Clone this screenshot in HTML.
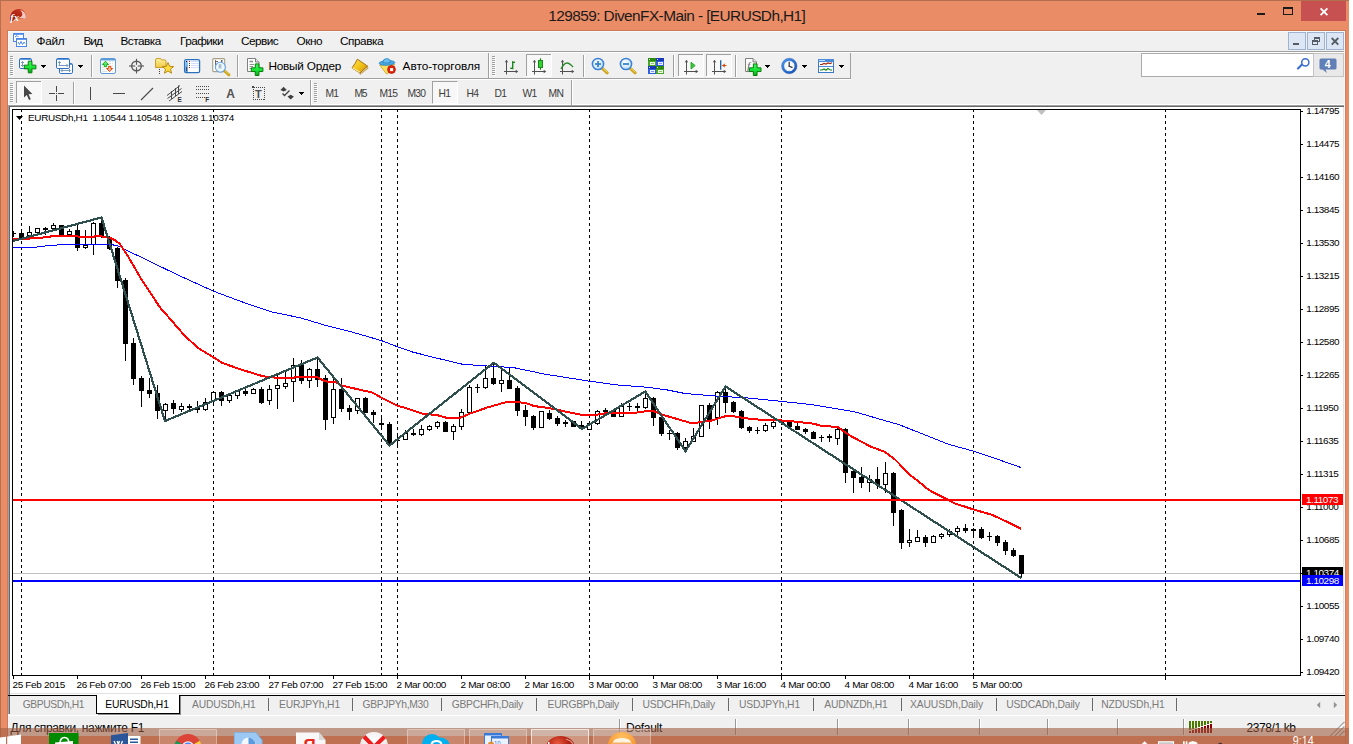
<!DOCTYPE html>
<html lang="ru"><head><meta charset="utf-8"><title>129859: DivenFX-Main - [EURUSDh,H1]</title>
<style>
html,body{margin:0;padding:0;background:#fff;}
body{width:1353px;height:744px;overflow:hidden;position:relative;font-family:"Liberation Sans",sans-serif;}
#win{position:absolute;left:0;top:0;width:1349px;height:744px;background:#ea8c66;overflow:hidden;}
#win div{position:absolute;white-space:nowrap;}
#edgeT{left:0;top:0;width:1349px;height:1px;background:#b07050;}
#edgeL{left:0;top:0;width:1px;height:744px;background:#b8704f;}
#title{color:#1a1a1a;line-height:20px;}
#wmin{left:1257px;top:13px;width:8px;height:2px;background:#1a1a1a;}
#wmax{left:1283px;top:7px;width:8px;height:5px;border:1px solid #1a1a1a;border-top-width:2px;}
#wclose{left:1301px;top:1px;width:45px;height:20px;background:#c75050;}
#client{left:8px;top:31px;width:1337px;height:705px;background:#f0f0f0;}
#menuline{left:0;top:20px;width:1337px;height:1px;background:#a0a0a0;}
#menuline2{left:0;top:21px;width:1337px;height:1px;background:#fff;}
#tb1line{left:0;top:47px;width:843px;height:1px;background:#a0a0a0;}
#tb1line2{left:0;top:48px;width:843px;height:1px;background:#fff;}
#tb1end{left:842px;top:22px;width:1px;height:26px;background:#a0a0a0;}
#tb2line{left:0;top:73px;width:1337px;height:1px;background:#fff;}
.mi{color:#000;line-height:14px;}
.mdib{top:32px;width:16px;height:16px;border:1px solid #9fb2cf;background:#dce6f4;}
.mdib svg{position:absolute;left:-1px;top:-1px;}
#search{left:1141px;top:53px;width:171px;height:22px;border:1px solid #ababab;background:#fff;}
#chatbtn{left:1313px;top:53px;width:29px;height:22px;border:1px solid #c4c4c4;background:#e9e9e9;}
.tf{color:#3c3c3c;line-height:12px;}
.pressed{background:#f7f7f7;border:1px solid #fff;border-top-color:#a0a0a0;border-left-color:#a0a0a0;box-sizing:border-box;}
#frameT1{left:8px;top:105px;width:1336px;height:1px;background:#a0a0a0;}
#frameT2{left:9px;top:106px;width:1335px;height:1px;background:#696969;}
#frameL1{left:8px;top:105px;width:1px;height:609px;background:#a0a0a0;}
#frameL2{left:9px;top:106px;width:1px;height:608px;background:#696969;}
svg.chart{position:absolute;}
.ct{line-height:11px;color:#000;}
.plab{left:1302px;width:41px;height:11px;color:#fff;line-height:11px;text-indent:4px;overflow:hidden;}
.tabline{top:695px;height:1px;background:#000;}
#win .acttab{left:96px;top:695px;width:82px;height:18px;background:#fff;border:1px solid #000;border-top:none;}
.tab{line-height:12px;color:#7a7a7a;}
.tab.act{color:#000;}
.tsep{top:698px;width:1px;height:13px;background:#6a6a6a;}
#stline{left:8px;top:715px;width:1337px;height:1px;background:#fff;}
.st{line-height:14px;color:#000;}
.ssep{top:719px;width:1px;height:16px;background:#989898;box-shadow:1px 0 0 #fff;}
.tbt{line-height:14px;color:#000;}
#taskbar{left:0;top:728px;width:1349px;height:16px;background:rgba(160,93,65,0.6);}
#frameR1{left:1343px;top:105px;width:1px;height:589px;background:#e3e3e3;}
#frameR2{left:1344px;top:31px;width:1px;height:705px;background:#fbfbfb;}
#edgeR{left:1345px;top:31px;width:1px;height:713px;background:#cf7d5c;}
#inT{left:7px;top:30px;width:1339px;height:1px;background:#cc7b5a;}
#inL{left:7px;top:30px;width:1px;height:714px;background:#cc7b5a;}
#clT{left:0;top:0;width:1337px;height:1px;background:#f7f8f8;}
#clL{left:0;top:0;width:1px;height:75px;background:#f7f8f8;}
.atsh{background:#8c8c8c;}
#frameB1{left:10px;top:693px;width:1334px;height:1px;background:#e3e3e3;}
#frameB2{left:9px;top:694px;width:1336px;height:1px;background:#fdfdfd;}

</style></head><body>
<div id="win">
<div id="edgeT"></div><div id="edgeL"></div><div id="inT"></div><div id="inL"></div>
<div id="title" style="left:548.3px;top:6px;font-size:15.4px;letter-spacing:-0.575px;">129859: DivenFX-Main - [EURUSDh,H1]</div>
<div id="wmin"></div><div id="wmax"></div><div id="wclose"><svg width="45" height="20"><path d="M19.6 7.4 L26.4 14.2 M26.4 7.4 L19.6 14.2" stroke="#fff" stroke-width="1.8" fill="none"/></svg></div>
<div id="client">
<div id="clT"></div><div id="clL"></div><div id="menuline"></div><div id="menuline2"></div>
<div id="tb1line"></div><div id="tb1line2"></div><div id="tb1end"></div>
<div id="tb2line"></div>
</div>
<div class="mi" style="left:36.5px;top:34px;font-size:11.8px;letter-spacing:-0.254px;">Файл</div>
<div class="mi" style="left:83.5px;top:34px;font-size:11.8px;letter-spacing:-1.015px;">Вид</div>
<div class="mi" style="left:120.5px;top:34px;font-size:11.8px;letter-spacing:-0.508px;">Вставка</div>
<div class="mi" style="left:180px;top:34px;font-size:11.8px;letter-spacing:-0.558px;">Графики</div>
<div class="mi" style="left:241px;top:34px;font-size:11.8px;letter-spacing:-0.568px;">Сервис</div>
<div class="mi" style="left:296.5px;top:34px;font-size:11.8px;letter-spacing:-0.48px;">Окно</div>
<div class="mi" style="left:340px;top:34px;font-size:11.8px;letter-spacing:-0.469px;">Справка</div>
<div class="mdib" style="left:1288px"><svg width="18" height="18"><rect x="5" y="11" width="6" height="2" fill="#555c66"/></svg></div>
<div class="mdib" style="left:1307px"><svg width="18" height="18" shape-rendering="crispEdges"><rect x="7.5" y="5.5" width="5" height="4" fill="none" stroke="#555c66"/><rect x="7" y="5" width="6" height="2" fill="#555c66"/><rect x="5.5" y="8.5" width="5" height="4" fill="#dce6f4" stroke="#555c66"/><rect x="5" y="8" width="6" height="2" fill="#555c66"/></svg></div>
<div class="mdib" style="left:1326px"><svg width="18" height="18"><path d="M5.700 6 L12.300 12.600 M12.300 6 L5.700 12.600" stroke="#555c66" stroke-width="1.900"/></svg></div>
<div id="search"><svg width="171" height="22" style="position:absolute;left:0;top:0"><line x1="156" y1="14.500" x2="161.500" y2="9" stroke="#3a6ed0" stroke-width="2.200" stroke-linecap="round"/><circle cx="163.300" cy="8.300" r="3.600" fill="#fff" stroke="#3a6ed0" stroke-width="1.500"/></svg></div><div id="chatbtn"><svg width="29" height="22" style="position:absolute;left:0;top:0"><path d="M7 4.500 h14 q1.500 0 1.500 1.500 v8 q0 1.500 -1.500 1.500 h-9.500 l1.500 3.500 l-4.500 -3.500 h-1.500 q-1.500 0 -1.500 -1.500 v-8 q0 -1.500 1.500 -1.500z" fill="#5f7fb6"/><text x="10.800" y="14.200" font-family="Liberation Sans,sans-serif" font-weight="bold" font-size="10.500" fill="#fff">4</text></svg></div>
<svg id="tbicons" style="position:absolute;left:0;top:0" width="1349" height="106" viewBox="0 0 1349 106">
<defs>
<linearGradient id="gGreen" x1="0" y1="0" x2="0" y2="1"><stop offset="0" stop-color="#3cf45a"/><stop offset=".5" stop-color="#18e838"/><stop offset="1" stop-color="#0aa818"/></linearGradient>
<linearGradient id="gGold" x1="0" y1="0" x2="1" y2="1"><stop offset="0" stop-color="#ffe455"/><stop offset=".5" stop-color="#f2c418"/><stop offset="1" stop-color="#c88c10"/></linearGradient>
<linearGradient id="gFold" x1="0" y1="0" x2="0" y2="1"><stop offset="0" stop-color="#fff2a0"/><stop offset="1" stop-color="#eec840"/></linearGradient>
<linearGradient id="gBlueBar" x1="0" y1="0" x2="0" y2="1"><stop offset="0" stop-color="#5a9be6"/><stop offset="1" stop-color="#2a6cc0"/></linearGradient>
<radialGradient id="gLens" cx=".4" cy=".35" r=".7"><stop offset="0" stop-color="#ffffff"/><stop offset="1" stop-color="#b8dcf8"/></radialGradient>
<radialGradient id="gBall" cx=".65" cy=".3" r=".8"><stop offset="0" stop-color="#f0a090"/><stop offset=".35" stop-color="#c8281a"/><stop offset="1" stop-color="#7a1008"/></radialGradient>
<linearGradient id="gBall2" x1="0" y1="1" x2="1" y2="0"><stop offset="0" stop-color="#8a1408"/><stop offset=".6" stop-color="#b82a18"/><stop offset="1" stop-color="#d04a38"/></linearGradient>
<linearGradient id="gSide" x1="0" y1="0" x2="0" y2="1"><stop offset="0" stop-color="#94c8f4"/><stop offset="1" stop-color="#3f88d4"/></linearGradient>
<linearGradient id="gClock" x1="0" y1="0" x2="1" y2="1"><stop offset="0" stop-color="#4a94ee"/><stop offset="1" stop-color="#1450b4"/></linearGradient>
</defs>
<path d="M10.200 20.600 C9.300 14 13 9 19 9.100 C23.600 9.300 26.400 13 26.100 18.600 C23 19.600 19.500 17.400 16.600 18.500 C15 19.300 14 21.700 10.400 21.400 Z" fill="url(#gBall2)"/>
<path d="M20.300 10.300 C24 10.800 26.300 14 25.900 18.500 C23.500 19.100 21 18 18.600 17.700 C22.500 17 23.800 14 20.300 10.300Z" fill="#fbe4dc" opacity=".85"/>
<text x="10.300" y="20.600" font-family="Liberation Serif,serif" font-style="italic" font-weight="bold" font-size="10.500" fill="#fff">fx</text>
<g shape-rendering="crispEdges" fill="#fff" stroke="#4a86e8" stroke-width="1"><rect x="13.5" y="33.5" width="10" height="8" stroke-dasharray="1 0"/><rect x="16.5" y="38.5" width="10" height="8"/></g>
<rect x="13" y="33" width="11" height="2" fill="#4a86e8" opacity=".8"/><rect x="16" y="38" width="11" height="2" fill="#4a86e8" opacity=".85"/>
<polyline points="18,42 19.5,44.5 21,41.5 22.5,44.5 24,42 25,43.5" fill="none" stroke="#4a86e8" stroke-width="1"/>
<polyline points="15,37 17,35.5 18.5,37" fill="none" stroke="#4a86e8" stroke-width="1"/>
<g shape-rendering="crispEdges"><rect x="10" y="56" width="3" height="1" fill="#a0a0a0"/><rect x="11" y="57" width="3" height="1" fill="#fff" opacity=".9"/><rect x="10" y="58" width="3" height="1" fill="#a0a0a0"/><rect x="11" y="59" width="3" height="1" fill="#fff" opacity=".9"/><rect x="10" y="60" width="3" height="1" fill="#a0a0a0"/><rect x="11" y="61" width="3" height="1" fill="#fff" opacity=".9"/><rect x="10" y="62" width="3" height="1" fill="#a0a0a0"/><rect x="11" y="63" width="3" height="1" fill="#fff" opacity=".9"/><rect x="10" y="64" width="3" height="1" fill="#a0a0a0"/><rect x="11" y="65" width="3" height="1" fill="#fff" opacity=".9"/><rect x="10" y="66" width="3" height="1" fill="#a0a0a0"/><rect x="11" y="67" width="3" height="1" fill="#fff" opacity=".9"/><rect x="10" y="68" width="3" height="1" fill="#a0a0a0"/><rect x="11" y="69" width="3" height="1" fill="#fff" opacity=".9"/><rect x="10" y="70" width="3" height="1" fill="#a0a0a0"/><rect x="11" y="71" width="3" height="1" fill="#fff" opacity=".9"/><rect x="10" y="72" width="3" height="1" fill="#a0a0a0"/><rect x="11" y="73" width="3" height="1" fill="#fff" opacity=".9"/><rect x="10" y="74" width="3" height="1" fill="#a0a0a0"/><rect x="11" y="75" width="3" height="1" fill="#fff" opacity=".9"/></g>
<rect x="19.5" y="58.5" width="12" height="10" rx="1.300" fill="#fbfdff" stroke="#2f6fc4" stroke-width="1"/><rect x="20" y="59" width="11" height="1" fill="#5f9be2"/>
<g stroke="#7a9ac0" stroke-width="1" fill="none"><line x1="22.500" y1="61.500" x2="22.500" y2="66.500"/><polyline points="21,63 22.500,61.500 24,63"/><polyline points="21,65 22.500,66.500 24,65"/></g>
<path d="M28.25 61.2 h3.7 v3.9499999999999997 h3.9499999999999997 v3.7 h-3.9499999999999997 v3.9499999999999997 h-3.7 v-3.9499999999999997 h-3.9499999999999997 v-3.7 h3.9499999999999997 z" fill="url(#gGreen)" stroke="#0a7a0a" stroke-width="1" stroke-linejoin="round"/>
<g shape-rendering="crispEdges" fill="#000"><rect x="41" y="65" width="5" height="1"/><rect x="42" y="66" width="3" height="1"/><rect x="43" y="67" width="1" height="1"/></g>
<rect x="59.5" y="63.5" width="13" height="10" rx="1.300" fill="#fbfdff" stroke="#2f6fc4" stroke-width="1"/><rect x="60" y="64" width="12" height="1" fill="#5f9be2"/>
<rect x="56.5" y="58.5" width="13" height="10" rx="1.300" fill="#fbfdff" stroke="#2f6fc4" stroke-width="1"/><rect x="57" y="59" width="12" height="1" fill="#5f9be2"/>
<g stroke="#7a9ac0" stroke-width="1" fill="none"><line x1="59.500" y1="61.500" x2="59.500" y2="66"/><polyline points="58,63 59.500,61.500 61,63"/><line x1="58.500" y1="65.500" x2="68" y2="65.500"/><polyline points="66.500,64 68,65.500 66.500,67"/><line x1="61" y1="70.500" x2="70.500" y2="70.500"/><polyline points="62.500,69 61,70.500 62.500,72"/><polyline points="69,69 70.500,70.500 69,72"/></g>
<g shape-rendering="crispEdges" fill="#000"><rect x="78" y="65" width="5" height="1"/><rect x="79" y="66" width="3" height="1"/><rect x="80" y="67" width="1" height="1"/></g>
<g shape-rendering="crispEdges"><rect x="91" y="55" width="1" height="22" fill="#a0a0a0"/><rect x="92" y="55" width="1" height="22" fill="#fff"/></g>
<rect x="100.500" y="58.500" width="15" height="15" rx="1.600" fill="#fff" stroke="#5b9bd8" stroke-width="1"/><path d="M100.500 60.500 v-0.500 q0 -1.500 1.500 -1.500 h12 q1.500 0 1.500 1.500 v0.500z" fill="#5b9bd8"/>
<g stroke="#e0e0e0" stroke-width="1" shape-rendering="crispEdges"><line x1="109" y1="61.500" x2="111" y2="61.500"/><line x1="112" y1="61.500" x2="113" y2="61.500"/><line x1="109" y1="63.500" x2="111" y2="63.500"/><line x1="112" y1="63.500" x2="113" y2="63.500"/><line x1="112" y1="65.500" x2="113" y2="65.500"/><line x1="102" y1="67.500" x2="104" y2="67.500"/><line x1="102" y1="69.500" x2="105" y2="69.500"/><line x1="102" y1="71.500" x2="107" y2="71.500"/><line x1="112" y1="71.500" x2="113" y2="71.500"/></g>
<polygon points="105.450,61.200 108.600,64.500 106.700,64.500 106.700,66.700 104.200,66.700 104.200,64.500 102.300,64.500" fill="#58ec70" stroke="#10a010" stroke-width=".9" stroke-linejoin="round"/>
<polygon points="109.600,71.600 106.500,68.500 108.400,68.500 108.400,66.300 110.900,66.300 110.900,68.500 112.700,68.500" fill="#ffb496" stroke="#d84000" stroke-width=".9" stroke-linejoin="round"/>
<g stroke="#585858" fill="none"><circle cx="136.5" cy="66" r="4.8" stroke-width="1.4"/><line x1="129" y1="66" x2="135.300" y2="66" stroke-width="1.1"/><line x1="137.700" y1="66" x2="144" y2="66" stroke-width="1.1"/><line x1="136.5" y1="58.8" x2="136.5" y2="64.800" stroke-width="1.1"/><line x1="136.5" y1="67.200" x2="136.5" y2="73.5" stroke-width="1.1"/></g>
<path d="M155.5 60 q0 -1.5 1.5 -1.5 h3 q1.2 0 1.6 1.4 h3.2 q1.2 0 1.2 1.2 v6.4 h-10.5z" fill="url(#gFold)" stroke="#c8a030" stroke-width="1"/>
<g fill="#404040" shape-rendering="crispEdges"><rect x="159" y="69" width="1" height="1"/><rect x="159" y="71" width="1" height="1"/><rect x="159" y="73" width="1" height="1"/></g>
<polygon points="168,62.6 169.6,66.3 173.6,66.6 170.5,69.2 171.5,73.2 168,71 164.5,73.2 165.5,69.2 162.4,66.6 166.4,66.3" fill="#ffdc40" stroke="#b88a10" stroke-width="1" stroke-linejoin="round"/>
<rect x="184.600" y="59.600" width="15" height="13" rx="1.600" fill="#fff" stroke="#2a70bc" stroke-width="1.300"/>
<rect x="185.300" y="60.300" width="2.500" height="11.600" fill="url(#gSide)"/>
<g shape-rendering="crispEdges"><rect x="186" y="61" width="1" height="1" fill="#101010"/><rect x="186" y="67" width="1" height="4" fill="#484c58"/><rect x="191" y="61" width="8" height="1" fill="#d4e0fa"/><rect x="191" y="63" width="8" height="1" fill="#d4e0fa"/><rect x="191" y="65" width="8" height="1" fill="#d4e0fa"/><rect x="191" y="67" width="8" height="1" fill="#d4e0fa"/><rect x="189" y="61" width="1" height="1" fill="#f01010"/><rect x="189" y="63" width="1" height="1" fill="#284a28"/><rect x="189" y="65" width="1" height="1" fill="#284a28"/><rect x="189" y="67" width="1" height="1" fill="#f01010"/></g>
<rect x="212.700" y="58.600" width="12" height="13" rx="1" fill="#fefefc" stroke="#a8a088" stroke-width="1.100"/>
<g stroke="#686868" stroke-width="1" fill="none"><line x1="215.500" y1="60" x2="215.500" y2="65.500"/><line x1="215.500" y1="61.500" x2="218" y2="61.500"/><line x1="221.500" y1="60" x2="221.500" y2="62.500"/><line x1="221.500" y1="61" x2="223" y2="61"/></g>
<line x1="224.600" y1="71" x2="229" y2="74.900" stroke="#c8a010" stroke-width="2.800" stroke-linecap="round"/><line x1="225.200" y1="70.900" x2="229.300" y2="74.500" stroke="#f0dc70" stroke-width=".9"/>
<circle cx="220.400" cy="67.200" r="5" fill="#eaf8fc" fill-opacity=".9" stroke="#6aa2e2" stroke-width="1.100"/>
<rect x="218.600" y="64.200" width="2.800" height="4.300" fill="#a4b6c2" opacity=".9"/>
<g shape-rendering="crispEdges"><rect x="237" y="55" width="1" height="22" fill="#a0a0a0"/><rect x="238" y="55" width="1" height="22" fill="#fff"/></g>
<path d="M247.500 58.500 h8 l3.500 3.500 v9.500 h-11.500z" fill="#fff" stroke="#808080" stroke-width="1"/><path d="M255.500 58.500 v3.500 h3.500" fill="#e8e8e8" stroke="#808080" stroke-width="1"/>
<g stroke="#909090" stroke-width="1"><line x1="249.500" y1="61.500" x2="253" y2="61.500" stroke-width="1.600"/><line x1="249.500" y1="64.500" x2="254" y2="64.500"/><line x1="249.500" y1="66.500" x2="253" y2="66.500"/><line x1="249.500" y1="68.500" x2="252" y2="68.500"/></g>
<path d="M255.25000000000003 63.900000000000006 h3.7 v3.9499999999999997 h3.9499999999999997 v3.7 h-3.9499999999999997 v3.9499999999999997 h-3.7 v-3.9499999999999997 h-3.9499999999999997 v-3.7 h3.9499999999999997 z" fill="url(#gGreen)" stroke="#0a7a0a" stroke-width="1" stroke-linejoin="round"/>
<path d="M360.100 74.300 L368 68.300 L367.500 66.300 L359.800 72.200z" fill="#e6d49a" stroke="#a87a20" stroke-width=".700" stroke-linejoin="round"/>
<path d="M357.400 59.200 L367.400 66 L360 73 L352 67.900 Q355 64 357.400 59.200z" fill="url(#gGold)" stroke="#a86c10" stroke-width="1" stroke-linejoin="round"/>
<path d="M352.600 67.700 L360 72.300" stroke="#fdeea0" stroke-width="1.300" opacity=".9"/>
<polygon points="379.700,65 394.700,64.400 388,73.600 386.300,73.800" fill="#f8e060" stroke="#d0a020" stroke-width=".800" stroke-linejoin="round"/>
<ellipse cx="387" cy="62.900" rx="7.900" ry="2.400" transform="rotate(-3 387 62.900)" fill="#4aa8e0" stroke="#2080c0" stroke-width=".700"/>
<path d="M382.800 62.500 q0.300 -4 3.900 -4 q3.600 0 3.900 3.800 q-3.900 1.500 -7.800 .200z" fill="#6cbcec" stroke="#2080c0" stroke-width=".700"/>
<circle cx="391.500" cy="69.500" r="3.900" fill="#e42408" stroke="#b01000" stroke-width=".800"/><rect x="390.100" y="68.100" width="3" height="3" fill="#fff"/>
<g shape-rendering="crispEdges"><rect x="488" y="53" width="1" height="25" fill="#a0a0a0"/><rect x="489" y="53" width="1" height="25" fill="#fff"/></g>
<g shape-rendering="crispEdges"><rect x="492" y="56" width="3" height="1" fill="#a0a0a0"/><rect x="493" y="57" width="3" height="1" fill="#fff" opacity=".9"/><rect x="492" y="58" width="3" height="1" fill="#a0a0a0"/><rect x="493" y="59" width="3" height="1" fill="#fff" opacity=".9"/><rect x="492" y="60" width="3" height="1" fill="#a0a0a0"/><rect x="493" y="61" width="3" height="1" fill="#fff" opacity=".9"/><rect x="492" y="62" width="3" height="1" fill="#a0a0a0"/><rect x="493" y="63" width="3" height="1" fill="#fff" opacity=".9"/><rect x="492" y="64" width="3" height="1" fill="#a0a0a0"/><rect x="493" y="65" width="3" height="1" fill="#fff" opacity=".9"/><rect x="492" y="66" width="3" height="1" fill="#a0a0a0"/><rect x="493" y="67" width="3" height="1" fill="#fff" opacity=".9"/><rect x="492" y="68" width="3" height="1" fill="#a0a0a0"/><rect x="493" y="69" width="3" height="1" fill="#fff" opacity=".9"/><rect x="492" y="70" width="3" height="1" fill="#a0a0a0"/><rect x="493" y="71" width="3" height="1" fill="#fff" opacity=".9"/><rect x="492" y="72" width="3" height="1" fill="#a0a0a0"/><rect x="493" y="73" width="3" height="1" fill="#fff" opacity=".9"/><rect x="492" y="74" width="3" height="1" fill="#a0a0a0"/><rect x="493" y="75" width="3" height="1" fill="#fff" opacity=".9"/></g>
<g stroke="#505050" stroke-width="1" fill="#505050"><line x1="506.5" y1="61" x2="506.5" y2="74.5"/><line x1="504" y1="71.5" x2="517" y2="71.5"/><polygon points="506.5,59.7 504.8,62.3 508.2,62.3" stroke="none"/><polygon points="518.3,71.5 515.7,69.8 515.7,73.2" stroke="none"/></g>
<g stroke="#1a8a1a" stroke-width="1.400" fill="none"><line x1="512.700" y1="61.300" x2="512.700" y2="69.300"/><line x1="512.700" y1="62.300" x2="515" y2="62.300"/><line x1="510.200" y1="68.300" x2="512.700" y2="68.300"/></g>
<g shape-rendering="crispEdges"><rect x="526" y="54" width="26" height="23" fill="#f8f8f8"/><rect x="526" y="54" width="26" height="1" fill="#a0a0a0"/><rect x="526" y="54" width="1" height="23" fill="#a0a0a0"/><rect x="526" y="76" width="26" height="1" fill="#fff"/><rect x="551" y="54" width="1" height="23" fill="#fff"/></g>
<g stroke="#505050" stroke-width="1" fill="#505050"><line x1="534.5" y1="61" x2="534.5" y2="74.5"/><line x1="532" y1="71.5" x2="545" y2="71.5"/><polygon points="534.5,59.7 532.8,62.3 536.2,62.3" stroke="none"/><polygon points="546.3,71.5 543.7,69.8 543.7,73.2" stroke="none"/></g>
<line x1="540.500" y1="58.300" x2="540.500" y2="69.800" stroke="#1a8a1a" stroke-width="1.200"/><rect x="538.500" y="60.500" width="4" height="7" fill="#30d030" stroke="#1a8a1a" stroke-width="1"/>
<g stroke="#505050" stroke-width="1" fill="#505050"><line x1="562.5" y1="61" x2="562.5" y2="74.5"/><line x1="560" y1="71.5" x2="573" y2="71.5"/><polygon points="562.5,59.7 560.8,62.3 564.2,62.3" stroke="none"/><polygon points="574.3,71.5 571.7,69.8 571.7,73.2" stroke="none"/></g>
<path d="M561 69 Q564 63 567 63 Q569.500 63 573 67" fill="none" stroke="#2a8a2a" stroke-width="1.300"/>
<g shape-rendering="crispEdges"><rect x="583" y="55" width="1" height="22" fill="#a0a0a0"/><rect x="584" y="55" width="1" height="22" fill="#fff"/></g>
<line x1="602" y1="68.2" x2="607.2" y2="72.8" stroke="#caa018" stroke-width="3" stroke-linecap="round"/><line x1="602.6" y1="68.2" x2="607.4" y2="72.4" stroke="#f4e070" stroke-width="1"/><circle cx="598" cy="64" r="5.600" fill="url(#gLens)" stroke="#3a80d4" stroke-width="1.500"/><rect x="595" y="63.1" width="6" height="1.800" fill="#3a86c8"/><rect x="597.1" y="61" width="1.800" height="6" fill="#3a86c8"/>
<line x1="630" y1="68.2" x2="635.2" y2="72.8" stroke="#caa018" stroke-width="3" stroke-linecap="round"/><line x1="630.6" y1="68.2" x2="635.4" y2="72.4" stroke="#f4e070" stroke-width="1"/><circle cx="626" cy="64" r="5.600" fill="url(#gLens)" stroke="#3a80d4" stroke-width="1.500"/><rect x="623" y="63.1" width="6" height="1.800" fill="#3a86c8"/>
<g shape-rendering="crispEdges"><rect x="648" y="58" width="8" height="8" fill="#4aa828"/><rect x="648" y="58" width="8" height="2.500" fill="#2c8a10"/><rect x="649.5" y="61.5" width="5" height="3.500" fill="#fff" opacity=".92"/><rect x="650.5" y="62.5" width="3" height="1" fill="#4aa828" opacity=".6"/><rect x="649" y="59" width="1" height="1" fill="#fff" opacity=".8"/><rect x="656" y="58" width="8" height="8" fill="#3060e0"/><rect x="656" y="58" width="8" height="2.500" fill="#1838b8"/><rect x="657.5" y="61.5" width="5" height="3.500" fill="#fff" opacity=".92"/><rect x="658.5" y="62.5" width="3" height="1" fill="#3060e0" opacity=".6"/><rect x="657" y="59" width="1" height="1" fill="#fff" opacity=".8"/><rect x="648" y="66" width="8" height="8" fill="#3060e0"/><rect x="648" y="66" width="8" height="2.500" fill="#1838b8"/><rect x="649.5" y="69.5" width="5" height="3.500" fill="#fff" opacity=".92"/><rect x="650.5" y="70.5" width="3" height="1" fill="#3060e0" opacity=".6"/><rect x="649" y="67" width="1" height="1" fill="#fff" opacity=".8"/><rect x="656" y="66" width="8" height="8" fill="#4aa828"/><rect x="656" y="66" width="8" height="2.500" fill="#2c8a10"/><rect x="657.5" y="69.5" width="5" height="3.500" fill="#fff" opacity=".92"/><rect x="658.5" y="70.5" width="3" height="1" fill="#4aa828" opacity=".6"/><rect x="657" y="67" width="1" height="1" fill="#fff" opacity=".8"/></g>
<g shape-rendering="crispEdges"><rect x="673" y="55" width="1" height="22" fill="#a0a0a0"/><rect x="674" y="55" width="1" height="22" fill="#fff"/></g>
<g shape-rendering="crispEdges"><rect x="678" y="54" width="26" height="23" fill="#f8f8f8"/><rect x="678" y="54" width="26" height="1" fill="#a0a0a0"/><rect x="678" y="54" width="1" height="23" fill="#a0a0a0"/><rect x="678" y="76" width="26" height="1" fill="#fff"/><rect x="703" y="54" width="1" height="23" fill="#fff"/></g>
<g stroke="#505050" stroke-width="1" fill="#505050"><line x1="686.5" y1="61" x2="686.5" y2="74.5"/><line x1="684" y1="71.5" x2="697" y2="71.5"/><polygon points="686.5,59.7 684.8,62.3 688.2,62.3" stroke="none"/><polygon points="698.3,71.5 695.7,69.8 695.7,73.2" stroke="none"/></g>
<polygon points="691,62.200 691,69 695.200,65.600" fill="#40c840" stroke="#1a9a1a" stroke-width=".8"/>
<g shape-rendering="crispEdges"><rect x="706" y="54" width="26" height="23" fill="#f8f8f8"/><rect x="706" y="54" width="26" height="1" fill="#a0a0a0"/><rect x="706" y="54" width="1" height="23" fill="#a0a0a0"/><rect x="706" y="76" width="26" height="1" fill="#fff"/><rect x="731" y="54" width="1" height="23" fill="#fff"/></g>
<g stroke="#505050" stroke-width="1" fill="#505050"><line x1="714.5" y1="61" x2="714.5" y2="74.5"/><line x1="712" y1="71.5" x2="725" y2="71.5"/><polygon points="714.5,59.7 712.8,62.3 716.2,62.3" stroke="none"/><polygon points="726.3,71.5 723.7,69.8 723.7,73.2" stroke="none"/></g>
<line x1="720.700" y1="60.300" x2="720.700" y2="69.800" stroke="#1a5fa0" stroke-width="1.300"/><polygon points="721.800,65.500 725.300,63.200 724.300,65.500 725.300,67.800" fill="#d84810"/><line x1="723" y1="65.500" x2="726.500" y2="65.500" stroke="#d84810" stroke-width="1"/>
<g shape-rendering="crispEdges"><rect x="735" y="55" width="1" height="22" fill="#a0a0a0"/><rect x="736" y="55" width="1" height="22" fill="#fff"/></g>
<path d="M745.500 58.500 h7.500 l3.500 3.500 v9.500 h-11z" fill="#fff" stroke="#808080" stroke-width="1"/><path d="M753 58.500 v3.500 h3.500" fill="#e8e8e8" stroke="#808080" stroke-width="1"/>
<text x="747.300" y="68.500" font-family="Liberation Serif,serif" font-style="italic" font-size="10" fill="#404040" text-rendering="geometricPrecision">f</text>
<path d="M753.35 63.900000000000006 h3.7 v3.9499999999999997 h3.9499999999999997 v3.7 h-3.9499999999999997 v3.9499999999999997 h-3.7 v-3.9499999999999997 h-3.9499999999999997 v-3.7 h3.9499999999999997 z" fill="url(#gGreen)" stroke="#0a7a0a" stroke-width="1" stroke-linejoin="round"/>
<g shape-rendering="crispEdges" fill="#000"><rect x="765" y="65" width="5" height="1"/><rect x="766" y="66" width="3" height="1"/><rect x="767" y="67" width="1" height="1"/></g>
<circle cx="789.300" cy="66" r="6.500" fill="#f8fbff" stroke="url(#gClock)" stroke-width="2.500"/><circle cx="789.300" cy="66" r="7.800" fill="none" stroke="#1a4a9c" stroke-width=".500" opacity=".7"/>
<g stroke="#303030" stroke-width="1.200" fill="none" stroke-linecap="round"><line x1="789.200" y1="66.200" x2="789.200" y2="62"/><line x1="789.200" y1="66.200" x2="792" y2="67.400"/></g><g fill="#9ab0d0"><circle cx="789.300" cy="61.300" r=".450"/><circle cx="789.300" cy="70.700" r=".450"/><circle cx="784.600" cy="66" r=".450"/><circle cx="794" cy="66" r=".450"/><circle cx="786" cy="62.700" r=".400"/><circle cx="792.600" cy="62.700" r=".400"/><circle cx="786" cy="69.300" r=".400"/><circle cx="792.600" cy="69.300" r=".400"/></g>
<g shape-rendering="crispEdges" fill="#000"><rect x="802" y="65" width="5" height="1"/><rect x="803" y="66" width="3" height="1"/><rect x="804" y="67" width="1" height="1"/></g>
<g shape-rendering="crispEdges"><rect x="818.500" y="59.500" width="15" height="13" fill="#fff" stroke="#3a78c8"/><rect x="818" y="59" width="16" height="3" fill="#4a8ad8"/><rect x="819" y="60" width="6" height="1" fill="#c0dcff"/><rect x="819" y="66" width="14" height="1" fill="#4a8ad8"/></g>
<polyline points="820,64.500 822,64.500 824,63.500 826,64 828,63 830,63.500 832,62.800" fill="none" stroke="#a02810" stroke-width="1.200"/>
<polyline points="820,70 822,70 824,69 826,70.300 828,68.600 830,69.800 832,70.200" fill="none" stroke="#1a8a1a" stroke-width="1.200"/>
<g shape-rendering="crispEdges" fill="#000"><rect x="839" y="65" width="5" height="1"/><rect x="840" y="66" width="3" height="1"/><rect x="841" y="67" width="1" height="1"/></g>
<g shape-rendering="crispEdges"><rect x="10" y="83" width="3" height="1" fill="#a0a0a0"/><rect x="11" y="84" width="3" height="1" fill="#fff" opacity=".9"/><rect x="10" y="85" width="3" height="1" fill="#a0a0a0"/><rect x="11" y="86" width="3" height="1" fill="#fff" opacity=".9"/><rect x="10" y="87" width="3" height="1" fill="#a0a0a0"/><rect x="11" y="88" width="3" height="1" fill="#fff" opacity=".9"/><rect x="10" y="89" width="3" height="1" fill="#a0a0a0"/><rect x="11" y="90" width="3" height="1" fill="#fff" opacity=".9"/><rect x="10" y="91" width="3" height="1" fill="#a0a0a0"/><rect x="11" y="92" width="3" height="1" fill="#fff" opacity=".9"/><rect x="10" y="93" width="3" height="1" fill="#a0a0a0"/><rect x="11" y="94" width="3" height="1" fill="#fff" opacity=".9"/><rect x="10" y="95" width="3" height="1" fill="#a0a0a0"/><rect x="11" y="96" width="3" height="1" fill="#fff" opacity=".9"/><rect x="10" y="97" width="3" height="1" fill="#a0a0a0"/><rect x="11" y="98" width="3" height="1" fill="#fff" opacity=".9"/><rect x="10" y="99" width="3" height="1" fill="#a0a0a0"/><rect x="11" y="100" width="3" height="1" fill="#fff" opacity=".9"/><rect x="10" y="101" width="3" height="1" fill="#a0a0a0"/><rect x="11" y="102" width="3" height="1" fill="#fff" opacity=".9"/></g>
<g shape-rendering="crispEdges"><rect x="16" y="81" width="26" height="23" fill="#f8f8f8"/><rect x="16" y="81" width="26" height="1" fill="#a0a0a0"/><rect x="16" y="81" width="1" height="23" fill="#a0a0a0"/><rect x="16" y="103" width="26" height="1" fill="#fff"/><rect x="41" y="81" width="1" height="23" fill="#fff"/></g>
<path d="M24 85.500 L24 97.500 L26.800 95 L29 100 L30.800 99.200 L28.600 94.300 L32.400 94z" fill="#484848"/>
<g stroke="#484848" stroke-width="1" shape-rendering="crispEdges"><line x1="49" y1="93.500" x2="55" y2="93.500"/><line x1="58" y1="93.500" x2="64" y2="93.500"/><line x1="56.500" y1="86" x2="56.500" y2="92"/><line x1="56.500" y1="95" x2="56.500" y2="101"/><rect x="56" y="93" width="1" height="1" stroke="none" fill="#484848"/></g>
<g shape-rendering="crispEdges"><rect x="73" y="82" width="1" height="22" fill="#a0a0a0"/><rect x="74" y="82" width="1" height="22" fill="#fff"/></g>
<g stroke="#484848" stroke-width="1" shape-rendering="crispEdges"><line x1="90.500" y1="87" x2="90.500" y2="100"/><line x1="113" y1="93.500" x2="125" y2="93.500"/></g>
<line x1="141" y1="100" x2="153" y2="88" stroke="#484848" stroke-width="1.100"/>
<g stroke="#484848" stroke-width="1" fill="none"><line x1="167" y1="95.500" x2="180" y2="85.500"/><line x1="167.500" y1="98.500" x2="181.500" y2="88.500"/><line x1="169" y1="101" x2="182" y2="91.500"/><line x1="171.500" y1="91" x2="171.500" y2="99"/><line x1="175.500" y1="88" x2="175.500" y2="96"/><line x1="178.500" y1="85.500" x2="178.500" y2="94"/></g>
<text x="177.500" y="102" font-family="Liberation Sans,sans-serif" font-weight="bold" font-size="6.500" fill="#303030">E</text>
<g stroke="#484848" stroke-width="1" stroke-dasharray="1 1" shape-rendering="crispEdges"><line x1="196" y1="86.500" x2="209" y2="86.500"/><line x1="196" y1="89.500" x2="209" y2="89.500"/><line x1="196" y1="93.500" x2="209" y2="93.500"/><line x1="196" y1="97.500" x2="205" y2="97.500"/></g>
<text x="205.300" y="102" font-family="Liberation Sans,sans-serif" font-weight="bold" font-size="6.500" fill="#303030">F</text>
<text x="226.300" y="97.600" font-family="Liberation Sans,sans-serif" font-weight="bold" font-size="12" fill="#505050">A</text>
<rect x="253.500" y="87.500" width="11" height="12" fill="none" stroke="#484848" stroke-width="1" stroke-dasharray="1 1" shape-rendering="crispEdges"/><rect x="252" y="86" width="2" height="2" fill="#484848"/>
<text x="255" y="97.600" font-family="Liberation Sans,sans-serif" font-weight="bold" font-size="11" fill="#505050">T</text>
<polygon points="283.600,86.800 286.800,90 283.600,91.600 280.400,90" fill="#404040"/><polygon points="290.700,99.600 293.900,96.400 290.700,94.800 287.500,96.400" fill="#404040"/><polyline points="282.500,93.500 284.500,95.500 289.500,90.500" fill="none" stroke="#404040" stroke-width="1.300"/>
<g shape-rendering="crispEdges" fill="#000"><rect x="299" y="92" width="5" height="1"/><rect x="300" y="93" width="3" height="1"/><rect x="301" y="94" width="1" height="1"/></g>
<g shape-rendering="crispEdges"><rect x="310" y="80" width="1" height="25" fill="#a0a0a0"/><rect x="311" y="80" width="1" height="25" fill="#fff"/></g>
<g shape-rendering="crispEdges"><rect x="314" y="83" width="3" height="1" fill="#a0a0a0"/><rect x="315" y="84" width="3" height="1" fill="#fff" opacity=".9"/><rect x="314" y="85" width="3" height="1" fill="#a0a0a0"/><rect x="315" y="86" width="3" height="1" fill="#fff" opacity=".9"/><rect x="314" y="87" width="3" height="1" fill="#a0a0a0"/><rect x="315" y="88" width="3" height="1" fill="#fff" opacity=".9"/><rect x="314" y="89" width="3" height="1" fill="#a0a0a0"/><rect x="315" y="90" width="3" height="1" fill="#fff" opacity=".9"/><rect x="314" y="91" width="3" height="1" fill="#a0a0a0"/><rect x="315" y="92" width="3" height="1" fill="#fff" opacity=".9"/><rect x="314" y="93" width="3" height="1" fill="#a0a0a0"/><rect x="315" y="94" width="3" height="1" fill="#fff" opacity=".9"/><rect x="314" y="95" width="3" height="1" fill="#a0a0a0"/><rect x="315" y="96" width="3" height="1" fill="#fff" opacity=".9"/><rect x="314" y="97" width="3" height="1" fill="#a0a0a0"/><rect x="315" y="98" width="3" height="1" fill="#fff" opacity=".9"/><rect x="314" y="99" width="3" height="1" fill="#a0a0a0"/><rect x="315" y="100" width="3" height="1" fill="#fff" opacity=".9"/><rect x="314" y="101" width="3" height="1" fill="#a0a0a0"/><rect x="315" y="102" width="3" height="1" fill="#fff" opacity=".9"/></g>
<g shape-rendering="crispEdges"><rect x="571" y="80" width="1" height="25" fill="#a0a0a0"/><rect x="572" y="80" width="1" height="25" fill="#fff"/></g>
</svg>
<div class="tbt" style="left:268.4px;top:59px;font-size:11.8px;letter-spacing:-0.225px;">Новый Ордер</div><div class="tbt" style="left:402.6px;top:59px;font-size:11.8px;letter-spacing:-0.031px;">Авто-торговля</div>
<div class="pressed" style="left:432px;top:81px;width:26px;height:23px"></div>
<div class="tf" style="left:325.4px;top:88px;font-size:10.3px;letter-spacing:-0.656px;">M1</div>
<div class="tf" style="left:354.4px;top:88px;font-size:10.3px;letter-spacing:-1.156px;">M5</div>
<div class="tf" style="left:379.4px;top:88px;font-size:10.3px;letter-spacing:-0.677px;">M15</div>
<div class="tf" style="left:407.4px;top:88px;font-size:10.3px;letter-spacing:-0.677px;">M30</div>
<div class="tf" style="left:438.4px;top:88px;font-size:10.3px;letter-spacing:-0.586px;">H1</div>
<div class="tf" style="left:466.4px;top:88px;font-size:10.3px;letter-spacing:-0.586px;">H4</div>
<div class="tf" style="left:494.4px;top:88px;font-size:10.3px;letter-spacing:-0.586px;">D1</div>
<div class="tf" style="left:522.4px;top:88px;font-size:10.3px;letter-spacing:-0.727px;">W1</div>
<div class="tf" style="left:548.4px;top:88px;font-size:10.3px;letter-spacing:-0.508px;">MN</div>
<div id="frameB1"></div><div id="frameB2"></div><div id="frameR1"></div><div id="frameR2"></div><div id="edgeR"></div><div id="frameT1"></div><div id="frameT2"></div><div id="frameL1"></div><div id="frameL2"></div>
<svg class="chart" style="left:10px;top:107px" width="1333" height="586" viewBox="10 107 1333 586" shape-rendering="crispEdges">
<rect x="10" y="107" width="1333" height="586" fill="#fff"/>
<defs><clipPath id="pc"><rect x="13" y="110" width="1287" height="565"/></clipPath></defs>
<g clip-path="url(#pc)">
<line x1="21.5" y1="109" x2="21.5" y2="675" stroke="#000" stroke-width="1" stroke-dasharray="3 3"/>
<line x1="213.5" y1="109" x2="213.5" y2="675" stroke="#000" stroke-width="1" stroke-dasharray="3 3"/>
<line x1="381.5" y1="109" x2="381.5" y2="675" stroke="#000" stroke-width="1" stroke-dasharray="3 3"/>
<line x1="397.5" y1="109" x2="397.5" y2="675" stroke="#000" stroke-width="1" stroke-dasharray="3 3"/>
<line x1="589.5" y1="109" x2="589.5" y2="675" stroke="#000" stroke-width="1" stroke-dasharray="3 3"/>
<line x1="781.5" y1="109" x2="781.5" y2="675" stroke="#000" stroke-width="1" stroke-dasharray="3 3"/>
<line x1="973.5" y1="109" x2="973.5" y2="675" stroke="#000" stroke-width="1" stroke-dasharray="3 3"/>
<line x1="1165.5" y1="109" x2="1165.5" y2="675" stroke="#000" stroke-width="1" stroke-dasharray="3 3"/>
<rect x="13" y="573" width="1287" height="1" fill="#c0c0c0"/>
<rect x="13" y="231" width="1" height="6" fill="#000"/>
<rect x="11" y="233" width="5" height="1" fill="#000"/>
<rect x="21" y="230" width="1" height="10" fill="#000"/>
<rect x="19" y="233" width="5" height="6" fill="#000"/>
<rect x="29" y="226" width="1" height="12" fill="#000"/>
<rect x="27" y="232" width="5" height="4" fill="#000"/>
<rect x="28" y="233" width="3" height="2" fill="#fff"/>
<rect x="37" y="228" width="1" height="5" fill="#000"/>
<rect x="35" y="228" width="5" height="5" fill="#000"/>
<rect x="36" y="229" width="3" height="3" fill="#fff"/>
<rect x="45" y="227" width="1" height="8" fill="#000"/>
<rect x="43" y="228" width="5" height="2" fill="#000"/>
<rect x="53" y="223" width="1" height="6" fill="#000"/>
<rect x="51" y="225" width="5" height="4" fill="#000"/>
<rect x="52" y="226" width="3" height="2" fill="#fff"/>
<rect x="61" y="225" width="1" height="10" fill="#000"/>
<rect x="59" y="225" width="5" height="10" fill="#000"/>
<rect x="69" y="229" width="1" height="6" fill="#000"/>
<rect x="67" y="231" width="5" height="4" fill="#000"/>
<rect x="68" y="232" width="3" height="2" fill="#fff"/>
<rect x="77" y="225" width="1" height="26" fill="#000"/>
<rect x="75" y="230" width="5" height="18" fill="#000"/>
<rect x="85" y="230" width="1" height="19" fill="#000"/>
<rect x="83" y="245" width="5" height="3" fill="#000"/>
<rect x="84" y="246" width="3" height="1" fill="#fff"/>
<rect x="93" y="222" width="1" height="33" fill="#000"/>
<rect x="91" y="223" width="5" height="22" fill="#000"/>
<rect x="92" y="224" width="3" height="20" fill="#fff"/>
<rect x="101" y="218" width="1" height="20" fill="#000"/>
<rect x="99" y="223" width="5" height="14" fill="#000"/>
<rect x="109" y="236" width="1" height="14" fill="#000"/>
<rect x="107" y="237" width="5" height="12" fill="#000"/>
<rect x="117" y="247" width="1" height="41" fill="#000"/>
<rect x="115" y="248" width="5" height="33" fill="#000"/>
<rect x="125" y="278" width="1" height="83" fill="#000"/>
<rect x="123" y="280" width="5" height="64" fill="#000"/>
<rect x="133" y="338" width="1" height="47" fill="#000"/>
<rect x="131" y="343" width="5" height="36" fill="#000"/>
<rect x="141" y="376" width="1" height="31" fill="#000"/>
<rect x="139" y="378" width="5" height="13" fill="#000"/>
<rect x="149" y="378" width="1" height="20" fill="#000"/>
<rect x="147" y="390" width="5" height="4" fill="#000"/>
<rect x="157" y="385" width="1" height="34" fill="#000"/>
<rect x="155" y="393" width="5" height="18" fill="#000"/>
<rect x="165" y="403" width="1" height="18" fill="#000"/>
<rect x="163" y="404" width="5" height="7" fill="#000"/>
<rect x="164" y="405" width="3" height="5" fill="#fff"/>
<rect x="173" y="400" width="1" height="14" fill="#000"/>
<rect x="171" y="403" width="5" height="6" fill="#000"/>
<rect x="181" y="403" width="1" height="9" fill="#000"/>
<rect x="179" y="406" width="5" height="4" fill="#000"/>
<rect x="180" y="407" width="3" height="2" fill="#fff"/>
<rect x="189" y="404" width="1" height="7" fill="#000"/>
<rect x="187" y="406" width="5" height="2" fill="#000"/>
<rect x="197" y="401" width="1" height="12" fill="#000"/>
<rect x="195" y="408" width="5" height="2" fill="#000"/>
<rect x="205" y="398" width="1" height="13" fill="#000"/>
<rect x="203" y="402" width="5" height="8" fill="#000"/>
<rect x="204" y="403" width="3" height="6" fill="#fff"/>
<rect x="213" y="391" width="1" height="12" fill="#000"/>
<rect x="211" y="392" width="5" height="9" fill="#000"/>
<rect x="212" y="393" width="3" height="7" fill="#fff"/>
<rect x="221" y="391" width="1" height="15" fill="#000"/>
<rect x="219" y="392" width="5" height="9" fill="#000"/>
<rect x="229" y="394" width="1" height="9" fill="#000"/>
<rect x="227" y="395" width="5" height="6" fill="#000"/>
<rect x="228" y="396" width="3" height="4" fill="#fff"/>
<rect x="237" y="390" width="1" height="9" fill="#000"/>
<rect x="235" y="391" width="5" height="5" fill="#000"/>
<rect x="236" y="392" width="3" height="3" fill="#fff"/>
<rect x="245" y="389" width="1" height="7" fill="#000"/>
<rect x="243" y="391" width="5" height="3" fill="#000"/>
<rect x="253" y="388" width="1" height="6" fill="#000"/>
<rect x="251" y="389" width="5" height="5" fill="#000"/>
<rect x="252" y="390" width="3" height="3" fill="#fff"/>
<rect x="261" y="387" width="1" height="17" fill="#000"/>
<rect x="259" y="389" width="5" height="14" fill="#000"/>
<rect x="269" y="385" width="1" height="20" fill="#000"/>
<rect x="267" y="389" width="5" height="12" fill="#000"/>
<rect x="268" y="390" width="3" height="10" fill="#fff"/>
<rect x="277" y="375" width="1" height="34" fill="#000"/>
<rect x="275" y="385" width="5" height="4" fill="#000"/>
<rect x="276" y="386" width="3" height="2" fill="#fff"/>
<rect x="285" y="372" width="1" height="17" fill="#000"/>
<rect x="283" y="383" width="5" height="4" fill="#000"/>
<rect x="284" y="384" width="3" height="2" fill="#fff"/>
<rect x="293" y="358" width="1" height="44" fill="#000"/>
<rect x="291" y="365" width="5" height="17" fill="#000"/>
<rect x="292" y="366" width="3" height="15" fill="#fff"/>
<rect x="301" y="360" width="1" height="24" fill="#000"/>
<rect x="299" y="364" width="5" height="17" fill="#000"/>
<rect x="309" y="368" width="1" height="20" fill="#000"/>
<rect x="307" y="369" width="5" height="12" fill="#000"/>
<rect x="308" y="370" width="3" height="10" fill="#fff"/>
<rect x="317" y="358" width="1" height="29" fill="#000"/>
<rect x="315" y="369" width="5" height="11" fill="#000"/>
<rect x="325" y="375" width="1" height="55" fill="#000"/>
<rect x="323" y="378" width="5" height="42" fill="#000"/>
<rect x="333" y="379" width="1" height="45" fill="#000"/>
<rect x="331" y="389" width="5" height="29" fill="#000"/>
<rect x="332" y="390" width="3" height="27" fill="#fff"/>
<rect x="341" y="378" width="1" height="34" fill="#000"/>
<rect x="339" y="389" width="5" height="20" fill="#000"/>
<rect x="349" y="405" width="1" height="15" fill="#000"/>
<rect x="347" y="408" width="5" height="4" fill="#000"/>
<rect x="357" y="398" width="1" height="16" fill="#000"/>
<rect x="355" y="398" width="5" height="13" fill="#000"/>
<rect x="356" y="399" width="3" height="11" fill="#fff"/>
<rect x="365" y="397" width="1" height="16" fill="#000"/>
<rect x="363" y="398" width="5" height="15" fill="#000"/>
<rect x="373" y="410" width="1" height="13" fill="#000"/>
<rect x="371" y="412" width="5" height="3" fill="#000"/>
<rect x="381" y="415" width="1" height="15" fill="#000"/>
<rect x="379" y="423" width="5" height="2" fill="#000"/>
<rect x="389" y="422" width="1" height="23" fill="#000"/>
<rect x="387" y="424" width="5" height="20" fill="#000"/>
<rect x="397" y="434" width="1" height="13" fill="#000"/>
<rect x="395" y="440" width="5" height="1" fill="#000"/>
<rect x="405" y="430" width="1" height="10" fill="#000"/>
<rect x="403" y="433" width="5" height="7" fill="#000"/>
<rect x="404" y="434" width="3" height="5" fill="#fff"/>
<rect x="413" y="429" width="1" height="7" fill="#000"/>
<rect x="411" y="433" width="5" height="2" fill="#000"/>
<rect x="421" y="425" width="1" height="11" fill="#000"/>
<rect x="419" y="429" width="5" height="6" fill="#000"/>
<rect x="420" y="430" width="3" height="4" fill="#fff"/>
<rect x="429" y="425" width="1" height="6" fill="#000"/>
<rect x="427" y="426" width="5" height="4" fill="#000"/>
<rect x="428" y="427" width="3" height="2" fill="#fff"/>
<rect x="437" y="421" width="1" height="8" fill="#000"/>
<rect x="435" y="422" width="5" height="5" fill="#000"/>
<rect x="436" y="423" width="3" height="3" fill="#fff"/>
<rect x="445" y="421" width="1" height="11" fill="#000"/>
<rect x="443" y="422" width="5" height="10" fill="#000"/>
<rect x="453" y="424" width="1" height="16" fill="#000"/>
<rect x="451" y="426" width="5" height="6" fill="#000"/>
<rect x="452" y="427" width="3" height="4" fill="#fff"/>
<rect x="461" y="409" width="1" height="21" fill="#000"/>
<rect x="459" y="412" width="5" height="15" fill="#000"/>
<rect x="460" y="413" width="3" height="13" fill="#fff"/>
<rect x="469" y="385" width="1" height="28" fill="#000"/>
<rect x="467" y="387" width="5" height="26" fill="#000"/>
<rect x="468" y="388" width="3" height="24" fill="#fff"/>
<rect x="477" y="384" width="1" height="9" fill="#000"/>
<rect x="475" y="387" width="5" height="1" fill="#000"/>
<rect x="485" y="366" width="1" height="23" fill="#000"/>
<rect x="483" y="378" width="5" height="10" fill="#000"/>
<rect x="484" y="379" width="3" height="8" fill="#fff"/>
<rect x="493" y="363" width="1" height="22" fill="#000"/>
<rect x="491" y="378" width="5" height="6" fill="#000"/>
<rect x="501" y="367" width="1" height="25" fill="#000"/>
<rect x="499" y="380" width="5" height="4" fill="#000"/>
<rect x="500" y="381" width="3" height="2" fill="#fff"/>
<rect x="509" y="367" width="1" height="22" fill="#000"/>
<rect x="507" y="380" width="5" height="9" fill="#000"/>
<rect x="517" y="386" width="1" height="30" fill="#000"/>
<rect x="515" y="388" width="5" height="23" fill="#000"/>
<rect x="525" y="405" width="1" height="21" fill="#000"/>
<rect x="523" y="410" width="5" height="7" fill="#000"/>
<rect x="533" y="415" width="1" height="15" fill="#000"/>
<rect x="531" y="416" width="5" height="12" fill="#000"/>
<rect x="541" y="411" width="1" height="17" fill="#000"/>
<rect x="539" y="411" width="5" height="17" fill="#000"/>
<rect x="540" y="412" width="3" height="15" fill="#fff"/>
<rect x="549" y="410" width="1" height="10" fill="#000"/>
<rect x="547" y="413" width="5" height="6" fill="#000"/>
<rect x="557" y="416" width="1" height="10" fill="#000"/>
<rect x="555" y="418" width="5" height="6" fill="#000"/>
<rect x="565" y="420" width="1" height="7" fill="#000"/>
<rect x="563" y="422" width="5" height="2" fill="#000"/>
<rect x="573" y="421" width="1" height="6" fill="#000"/>
<rect x="571" y="421" width="5" height="6" fill="#000"/>
<rect x="581" y="421" width="1" height="8" fill="#000"/>
<rect x="579" y="425" width="5" height="4" fill="#000"/>
<rect x="589" y="422" width="1" height="8" fill="#000"/>
<rect x="587" y="423" width="5" height="7" fill="#000"/>
<rect x="588" y="424" width="3" height="5" fill="#fff"/>
<rect x="597" y="410" width="1" height="15" fill="#000"/>
<rect x="595" y="411" width="5" height="13" fill="#000"/>
<rect x="596" y="412" width="3" height="11" fill="#fff"/>
<rect x="605" y="408" width="1" height="6" fill="#000"/>
<rect x="603" y="410" width="5" height="2" fill="#000"/>
<rect x="613" y="409" width="1" height="8" fill="#000"/>
<rect x="611" y="410" width="5" height="7" fill="#000"/>
<rect x="621" y="403" width="1" height="14" fill="#000"/>
<rect x="619" y="406" width="5" height="11" fill="#000"/>
<rect x="620" y="407" width="3" height="9" fill="#fff"/>
<rect x="629" y="403" width="1" height="8" fill="#000"/>
<rect x="627" y="406" width="5" height="1" fill="#000"/>
<rect x="637" y="403" width="1" height="8" fill="#000"/>
<rect x="635" y="406" width="5" height="2" fill="#000"/>
<rect x="645" y="391" width="1" height="18" fill="#000"/>
<rect x="643" y="398" width="5" height="10" fill="#000"/>
<rect x="644" y="399" width="3" height="8" fill="#fff"/>
<rect x="653" y="397" width="1" height="29" fill="#000"/>
<rect x="651" y="398" width="5" height="20" fill="#000"/>
<rect x="661" y="416" width="1" height="20" fill="#000"/>
<rect x="659" y="417" width="5" height="17" fill="#000"/>
<rect x="669" y="430" width="1" height="10" fill="#000"/>
<rect x="667" y="433" width="5" height="1" fill="#000"/>
<rect x="677" y="432" width="1" height="18" fill="#000"/>
<rect x="675" y="433" width="5" height="15" fill="#000"/>
<rect x="685" y="438" width="1" height="13" fill="#000"/>
<rect x="683" y="441" width="5" height="7" fill="#000"/>
<rect x="684" y="442" width="3" height="5" fill="#fff"/>
<rect x="693" y="428" width="1" height="14" fill="#000"/>
<rect x="691" y="436" width="5" height="6" fill="#000"/>
<rect x="692" y="437" width="3" height="4" fill="#fff"/>
<rect x="701" y="405" width="1" height="32" fill="#000"/>
<rect x="699" y="405" width="5" height="32" fill="#000"/>
<rect x="700" y="406" width="3" height="30" fill="#fff"/>
<rect x="709" y="403" width="1" height="26" fill="#000"/>
<rect x="707" y="405" width="5" height="15" fill="#000"/>
<rect x="717" y="391" width="1" height="34" fill="#000"/>
<rect x="715" y="392" width="5" height="26" fill="#000"/>
<rect x="716" y="393" width="3" height="24" fill="#fff"/>
<rect x="725" y="387" width="1" height="26" fill="#000"/>
<rect x="723" y="392" width="5" height="11" fill="#000"/>
<rect x="733" y="401" width="1" height="12" fill="#000"/>
<rect x="731" y="402" width="5" height="10" fill="#000"/>
<rect x="741" y="410" width="1" height="19" fill="#000"/>
<rect x="739" y="411" width="5" height="17" fill="#000"/>
<rect x="749" y="426" width="1" height="7" fill="#000"/>
<rect x="747" y="427" width="5" height="4" fill="#000"/>
<rect x="757" y="427" width="1" height="7" fill="#000"/>
<rect x="755" y="430" width="5" height="1" fill="#000"/>
<rect x="765" y="423" width="1" height="9" fill="#000"/>
<rect x="763" y="425" width="5" height="6" fill="#000"/>
<rect x="764" y="426" width="3" height="4" fill="#fff"/>
<rect x="773" y="421" width="1" height="8" fill="#000"/>
<rect x="771" y="422" width="5" height="5" fill="#000"/>
<rect x="772" y="423" width="3" height="3" fill="#fff"/>
<rect x="781" y="420" width="1" height="5" fill="#000"/>
<rect x="779" y="421" width="5" height="2" fill="#000"/>
<rect x="789" y="421" width="1" height="6" fill="#000"/>
<rect x="787" y="422" width="5" height="5" fill="#000"/>
<rect x="797" y="423" width="1" height="7" fill="#000"/>
<rect x="795" y="426" width="5" height="4" fill="#000"/>
<rect x="805" y="428" width="1" height="6" fill="#000"/>
<rect x="803" y="429" width="5" height="3" fill="#000"/>
<rect x="813" y="431" width="1" height="8" fill="#000"/>
<rect x="811" y="432" width="5" height="7" fill="#000"/>
<rect x="821" y="435" width="1" height="7" fill="#000"/>
<rect x="819" y="437" width="5" height="1" fill="#000"/>
<rect x="829" y="434" width="1" height="8" fill="#000"/>
<rect x="827" y="436" width="5" height="2" fill="#000"/>
<rect x="837" y="428" width="1" height="17" fill="#000"/>
<rect x="835" y="429" width="5" height="10" fill="#000"/>
<rect x="836" y="430" width="3" height="8" fill="#fff"/>
<rect x="845" y="428" width="1" height="55" fill="#000"/>
<rect x="843" y="429" width="5" height="44" fill="#000"/>
<rect x="853" y="470" width="1" height="23" fill="#000"/>
<rect x="851" y="471" width="5" height="7" fill="#000"/>
<rect x="861" y="467" width="1" height="21" fill="#000"/>
<rect x="859" y="477" width="5" height="6" fill="#000"/>
<rect x="869" y="475" width="1" height="17" fill="#000"/>
<rect x="867" y="479" width="5" height="4" fill="#000"/>
<rect x="868" y="480" width="3" height="2" fill="#fff"/>
<rect x="877" y="467" width="1" height="22" fill="#000"/>
<rect x="875" y="479" width="5" height="6" fill="#000"/>
<rect x="885" y="462" width="1" height="31" fill="#000"/>
<rect x="883" y="473" width="5" height="12" fill="#000"/>
<rect x="884" y="474" width="3" height="10" fill="#fff"/>
<rect x="893" y="472" width="1" height="54" fill="#000"/>
<rect x="891" y="473" width="5" height="40" fill="#000"/>
<rect x="901" y="509" width="1" height="40" fill="#000"/>
<rect x="899" y="510" width="5" height="33" fill="#000"/>
<rect x="909" y="529" width="1" height="18" fill="#000"/>
<rect x="907" y="540" width="5" height="3" fill="#000"/>
<rect x="908" y="541" width="3" height="1" fill="#fff"/>
<rect x="917" y="530" width="1" height="12" fill="#000"/>
<rect x="915" y="537" width="5" height="5" fill="#000"/>
<rect x="916" y="538" width="3" height="3" fill="#fff"/>
<rect x="925" y="535" width="1" height="12" fill="#000"/>
<rect x="923" y="537" width="5" height="6" fill="#000"/>
<rect x="933" y="535" width="1" height="8" fill="#000"/>
<rect x="931" y="536" width="5" height="7" fill="#000"/>
<rect x="932" y="537" width="3" height="5" fill="#fff"/>
<rect x="941" y="533" width="1" height="6" fill="#000"/>
<rect x="939" y="534" width="5" height="3" fill="#000"/>
<rect x="940" y="535" width="3" height="1" fill="#fff"/>
<rect x="949" y="529" width="1" height="8" fill="#000"/>
<rect x="947" y="531" width="5" height="4" fill="#000"/>
<rect x="948" y="532" width="3" height="2" fill="#fff"/>
<rect x="957" y="526" width="1" height="9" fill="#000"/>
<rect x="955" y="528" width="5" height="4" fill="#000"/>
<rect x="956" y="529" width="3" height="2" fill="#fff"/>
<rect x="965" y="524" width="1" height="9" fill="#000"/>
<rect x="963" y="528" width="5" height="3" fill="#000"/>
<rect x="973" y="528" width="1" height="10" fill="#000"/>
<rect x="971" y="529" width="5" height="2" fill="#000"/>
<rect x="981" y="527" width="1" height="12" fill="#000"/>
<rect x="979" y="529" width="5" height="9" fill="#000"/>
<rect x="989" y="532" width="1" height="9" fill="#000"/>
<rect x="987" y="536" width="5" height="1" fill="#000"/>
<rect x="997" y="535" width="1" height="11" fill="#000"/>
<rect x="995" y="536" width="5" height="7" fill="#000"/>
<rect x="1005" y="540" width="1" height="15" fill="#000"/>
<rect x="1003" y="542" width="5" height="9" fill="#000"/>
<rect x="1013" y="548" width="1" height="9" fill="#000"/>
<rect x="1011" y="550" width="5" height="6" fill="#000"/>
<rect x="1021" y="555" width="1" height="23" fill="#000"/>
<rect x="1019" y="555" width="5" height="19" fill="#000"/>
</g>
<g clip-path="url(#pc)" shape-rendering="crispEdges" fill="none">
<polyline points="13,247.7 32.5,247.5 48.75,245.6 65,244.4 108.75,244.4 115,245.2 120,246.5 125,249.6 145,259 162.8,267.7 179,275.5 213,291 241,301.5 270.9,311.7 301,318 326,325.5 351.3,331.8 381.4,340.6 397.7,346.8 412.5,352 436.25,358 462.5,364.25 493.75,366.5 512.5,367.4 530,371 544,374 590,381.25 617.5,385 647.5,387.25 667.5,390 685,393.5 710,395.6 747.5,398 782.5,401.5 810,404.4 854,411.6 900,425 948.75,444.4 973.75,451.25 999,459.75 1021,467.5" stroke="#0000ff" stroke-width="1"/>
<polyline points="13,239.5 30,238.5 46,237.25 56,235.6 77,235.8 79,237.1 93.5,237.1 95,236 101,236 102.5,236.9 106.8,236.9 110.3,238 114.8,240.2 119.2,243.3 123.6,249.5 126,253 128.75,257.5 141,278.75 150.3,292.8 160,307.5 170.4,319.2 184,335 198,348 213,357 222.5,363 241,369.5 263,376.3 279,378 293.75,378 295,376.75 317,377 325,381.4 335,382 342.5,385.75 372.5,392.6 381.25,397.6 397.5,405.75 406.25,408.25 422,413.5 437.5,415.25 446.25,417.75 460,417.75 470,413.6 487.5,407.4 507.5,401.75 525,402.75 533.75,406 548.75,408 567.5,412 582.5,415 595,415 607.5,413 637.5,412.5 647.5,411 653.75,411.25 662.5,414.75 673.75,418 690,422.75 696.25,422.75 711.25,420.6 726.25,416 732.5,416 743.75,418 760,419.75 785,420.6 797.5,421.9 813.75,423.75 822.5,426.25 837.5,426.7 843.75,431.25 851.25,436.25 871.25,446.9 885,451.9 895,459.4 910,475 917.5,480.6 928.75,490 942.5,496.9 955,503.5 973.75,509.5 992.5,515 1012.5,524.4 1021.25,529" stroke="#ff0000" stroke-width="2" stroke-linejoin="round"/>
<polyline points="13,241 101.5,217.5 165,421 317.5,357.5 389.5,445.5 493.75,362.75 582,429 645.25,391.5 685.5,451.25 725.5,386.5 1021.25,578" stroke="#2f4f4f" stroke-width="2.2" stroke-linejoin="miter"/>
</g>
<rect x="13" y="499" width="1287" height="2" fill="#ff0000"/>
<rect x="13" y="580" width="1287" height="2" fill="#0000ff"/>
<polygon points="1037,110 1046,110 1041.5,115" fill="#c0c0c0" shape-rendering="auto"/>
<rect x="12.5" y="109.5" width="1288" height="566" fill="none" stroke="#000" stroke-width="1"/>
<polygon points="16,116 23,116 19.5,120" fill="#000" shape-rendering="auto"/>
<rect x="1301" y="111" width="2" height="1" fill="#000"/>
<rect x="1301" y="144" width="2" height="1" fill="#000"/>
<rect x="1301" y="177" width="2" height="1" fill="#000"/>
<rect x="1301" y="210" width="2" height="1" fill="#000"/>
<rect x="1301" y="243" width="2" height="1" fill="#000"/>
<rect x="1301" y="276" width="2" height="1" fill="#000"/>
<rect x="1301" y="309" width="2" height="1" fill="#000"/>
<rect x="1301" y="342" width="2" height="1" fill="#000"/>
<rect x="1301" y="375" width="2" height="1" fill="#000"/>
<rect x="1301" y="408" width="2" height="1" fill="#000"/>
<rect x="1301" y="441" width="2" height="1" fill="#000"/>
<rect x="1301" y="474" width="2" height="1" fill="#000"/>
<rect x="1301" y="507" width="2" height="1" fill="#000"/>
<rect x="1301" y="540" width="2" height="1" fill="#000"/>
<rect x="1301" y="573" width="2" height="1" fill="#000"/>
<rect x="1301" y="606" width="2" height="1" fill="#000"/>
<rect x="1301" y="639" width="2" height="1" fill="#000"/>
<rect x="1301" y="672" width="2" height="1" fill="#000"/>
<rect x="13" y="676" width="1" height="3" fill="#000"/>
<rect x="77" y="676" width="1" height="3" fill="#000"/>
<rect x="141" y="676" width="1" height="3" fill="#000"/>
<rect x="205" y="676" width="1" height="3" fill="#000"/>
<rect x="269" y="676" width="1" height="3" fill="#000"/>
<rect x="333" y="676" width="1" height="3" fill="#000"/>
<rect x="397" y="676" width="1" height="3" fill="#000"/>
<rect x="461" y="676" width="1" height="3" fill="#000"/>
<rect x="525" y="676" width="1" height="3" fill="#000"/>
<rect x="589" y="676" width="1" height="3" fill="#000"/>
<rect x="653" y="676" width="1" height="3" fill="#000"/>
<rect x="717" y="676" width="1" height="3" fill="#000"/>
<rect x="781" y="676" width="1" height="3" fill="#000"/>
<rect x="845" y="676" width="1" height="3" fill="#000"/>
<rect x="909" y="676" width="1" height="3" fill="#000"/>
<rect x="973" y="676" width="1" height="3" fill="#000"/>
<rect x="589" y="676" width="1" height="4" fill="#000"/>
<rect x="781" y="676" width="1" height="4" fill="#000"/>
<rect x="1165" y="676" width="1" height="4" fill="#000"/>
</svg>
<div class="ct" style="left:28px;top:112px;font-size:9.95px;letter-spacing:-0.336px;white-space:pre;">EURUSDh,H1  1.10544 1.10548 1.10328 1.10374</div>
<div class="ct" style="left:1306.3px;top:105px;font-size:9.95px;letter-spacing:-0.446px">1.14795</div>
<div class="ct" style="left:1306.3px;top:138px;font-size:9.95px;letter-spacing:-0.446px">1.14475</div>
<div class="ct" style="left:1306.3px;top:171px;font-size:9.95px;letter-spacing:-0.446px">1.14160</div>
<div class="ct" style="left:1306.3px;top:204px;font-size:9.95px;letter-spacing:-0.446px">1.13845</div>
<div class="ct" style="left:1306.3px;top:237px;font-size:9.95px;letter-spacing:-0.446px">1.13530</div>
<div class="ct" style="left:1306.3px;top:270px;font-size:9.95px;letter-spacing:-0.446px">1.13215</div>
<div class="ct" style="left:1306.3px;top:303px;font-size:9.95px;letter-spacing:-0.446px">1.12895</div>
<div class="ct" style="left:1306.3px;top:336px;font-size:9.95px;letter-spacing:-0.446px">1.12580</div>
<div class="ct" style="left:1306.3px;top:369px;font-size:9.95px;letter-spacing:-0.446px">1.12265</div>
<div class="ct" style="left:1306.3px;top:402px;font-size:9.95px;letter-spacing:-0.446px">1.11950</div>
<div class="ct" style="left:1306.3px;top:435px;font-size:9.95px;letter-spacing:-0.446px">1.11635</div>
<div class="ct" style="left:1306.3px;top:468px;font-size:9.95px;letter-spacing:-0.446px">1.11315</div>
<div class="ct" style="left:1306.3px;top:501px;font-size:9.95px;letter-spacing:-0.446px">1.11000</div>
<div class="ct" style="left:1306.3px;top:534px;font-size:9.95px;letter-spacing:-0.446px">1.10685</div>
<div class="ct" style="left:1306.3px;top:600px;font-size:9.95px;letter-spacing:-0.446px">1.10055</div>
<div class="ct" style="left:1306.3px;top:633px;font-size:9.95px;letter-spacing:-0.446px">1.09740</div>
<div class="ct" style="left:1306.3px;top:666px;font-size:9.95px;letter-spacing:-0.446px">1.09420</div>
<div class="ct" style="left:12.5px;top:679px;font-size:9.95px;letter-spacing:-0.315px">25 Feb 2015</div>
<div class="ct" style="left:76.5px;top:679px;font-size:9.95px;letter-spacing:-0.315px">26 Feb 07:00</div>
<div class="ct" style="left:140.5px;top:679px;font-size:9.95px;letter-spacing:-0.315px">26 Feb 15:00</div>
<div class="ct" style="left:204.5px;top:679px;font-size:9.95px;letter-spacing:-0.315px">26 Feb 23:00</div>
<div class="ct" style="left:268.5px;top:679px;font-size:9.95px;letter-spacing:-0.315px">27 Feb 07:00</div>
<div class="ct" style="left:332.5px;top:679px;font-size:9.95px;letter-spacing:-0.315px">27 Feb 15:00</div>
<div class="ct" style="left:396.5px;top:679px;font-size:9.95px;letter-spacing:-0.315px">2 Mar 00:00</div>
<div class="ct" style="left:460.5px;top:679px;font-size:9.95px;letter-spacing:-0.315px">2 Mar 08:00</div>
<div class="ct" style="left:524.5px;top:679px;font-size:9.95px;letter-spacing:-0.315px">2 Mar 16:00</div>
<div class="ct" style="left:588.5px;top:679px;font-size:9.95px;letter-spacing:-0.315px">3 Mar 00:00</div>
<div class="ct" style="left:652.5px;top:679px;font-size:9.95px;letter-spacing:-0.315px">3 Mar 08:00</div>
<div class="ct" style="left:716.5px;top:679px;font-size:9.95px;letter-spacing:-0.315px">3 Mar 16:00</div>
<div class="ct" style="left:780.5px;top:679px;font-size:9.95px;letter-spacing:-0.315px">4 Mar 00:00</div>
<div class="ct" style="left:844.5px;top:679px;font-size:9.95px;letter-spacing:-0.315px">4 Mar 08:00</div>
<div class="ct" style="left:908.5px;top:679px;font-size:9.95px;letter-spacing:-0.315px">4 Mar 16:00</div>
<div class="ct" style="left:972.5px;top:679px;font-size:9.95px;letter-spacing:-0.315px">5 Mar 00:00</div>
<div class="plab" style="top:494px;background:#ff0000;font-size:9.95px;letter-spacing:-0.446px">1.11073</div>
<div class="plab" style="top:567px;background:#000;font-size:9.95px;letter-spacing:-0.446px">1.10374</div>
<div class="plab" style="top:575px;background:#0000ff;font-size:9.95px;letter-spacing:-0.446px">1.10298</div>
<div class="tabline" style="left:8px;width:89px"></div>
<div class="tabline" style="left:180px;width:1165px"></div>
<div class="acttab"></div><div class="atsh" style="left:180px;top:696px;width:1px;height:19px"></div><div class="atsh" style="left:98px;top:714px;width:83px;height:1px"></div>
<div class="tab" style="left:22.7px;top:699px;font-size:10.3px;letter-spacing:-0.375px;">GBPUSDh,H1</div>
<div class="tab act" style="left:105.2px;top:699px;font-size:10.3px;letter-spacing:-0.173px;">EURUSDh,H1</div>
<div class="tab" style="left:192px;top:699px;font-size:10.3px;letter-spacing:-0.163px;">AUDUSDh,H1</div>
<div class="tab" style="left:279px;top:699px;font-size:10.3px;letter-spacing:-0.138px;">EURJPYh,H1</div>
<div class="tab" style="left:362.5px;top:699px;font-size:10.3px;letter-spacing:-0.314px;">GBPJPYh,M30</div>
<div class="tab" style="left:451.7px;top:699px;font-size:10.3px;letter-spacing:-0.245px;">GBPCHFh,Daily</div>
<div class="tab" style="left:547.6px;top:699px;font-size:10.3px;letter-spacing:-0.275px;">EURGBPh,Daily</div>
<div class="tab" style="left:642.5px;top:699px;font-size:10.3px;letter-spacing:-0.145px;">USDCHFh,Daily</div>
<div class="tab" style="left:739px;top:699px;font-size:10.3px;letter-spacing:-0.138px;">USDJPYh,H1</div>
<div class="tab" style="left:824.3px;top:699px;font-size:10.3px;letter-spacing:-0.126px;">AUDNZDh,H1</div>
<div class="tab" style="left:910px;top:699px;font-size:10.3px;letter-spacing:-0.107px;">XAUUSDh,Daily</div>
<div class="tab" style="left:1006.3px;top:699px;font-size:10.3px;letter-spacing:-0.113px;">USDCADh,Daily</div>
<div class="tab" style="left:1101.2px;top:699px;font-size:10.3px;letter-spacing:-0.116px;">NZDUSDh,H1</div>
<div class="tsep" style="left:268px"></div>
<div class="tsep" style="left:352px"></div>
<div class="tsep" style="left:441px"></div>
<div class="tsep" style="left:536px"></div>
<div class="tsep" style="left:632px"></div>
<div class="tsep" style="left:728px"></div>
<div class="tsep" style="left:813px"></div>
<div class="tsep" style="left:901px"></div>
<div class="tsep" style="left:996px"></div>
<div class="tsep" style="left:1092px"></div>
<div class="tsep" style="left:1176px"></div>
<svg style="position:absolute;left:1314px;top:699px" width="26" height="12"><polygon points="6.200,2.800 6.200,9.200 2.800,6" fill="#939393"/><polygon points="19.800,2.800 19.800,9.200 23.200,6" fill="#939393"/></svg>
<div id="stline"></div>
<div class="st" style="left:10.5px;top:721px;font-size:12px;letter-spacing:-0.346px;">Для справки, нажмите F1</div>
<div class="st" style="left:626px;top:721px;font-size:12px;letter-spacing:-0.29px;">Default</div>
<div class="st" style="left:1246.5px;top:721px;font-size:12px;letter-spacing:-0.413px;">2378/1 kb</div>
<div class="ssep" style="left:619px"></div>
<div class="ssep" style="left:735px"></div>
<div class="ssep" style="left:837px"></div>
<div class="ssep" style="left:908px"></div>
<div class="ssep" style="left:979px"></div>
<div class="ssep" style="left:1047px"></div>
<div class="ssep" style="left:1117px"></div>
<div class="ssep" style="left:1183px"></div>
<svg style="position:absolute;left:1189px;top:721px" width="24" height="13" shape-rendering="crispEdges"><rect x="0" y="0" width="2" height="9" fill="#4a7a00"/><rect x="0" y="10" width="2" height="2" fill="#8a0000"/><rect x="3" y="0" width="2" height="8" fill="#4a7a00"/><rect x="3" y="9" width="2" height="3" fill="#8a0000"/><rect x="6" y="0" width="2" height="7" fill="#4a7a00"/><rect x="6" y="8" width="2" height="4" fill="#8a0000"/><rect x="9" y="0" width="2" height="6" fill="#4a7a00"/><rect x="9" y="7" width="2" height="5" fill="#8a0000"/><rect x="12" y="0" width="2" height="5" fill="#4a7a00"/><rect x="12" y="6" width="2" height="6" fill="#8a0000"/><rect x="15" y="0" width="2" height="4" fill="#4a7a00"/><rect x="15" y="5" width="2" height="7" fill="#8a0000"/><rect x="18" y="0" width="2" height="3" fill="#4a7a00"/><rect x="18" y="4" width="2" height="8" fill="#8a0000"/><rect x="21" y="0" width="2" height="2" fill="#4a7a00"/><rect x="21" y="3" width="2" height="9" fill="#8a0000"/></svg>
<svg style="position:absolute;left:1329px;top:721px" width="16" height="15"><g stroke="#a0a0a0" stroke-width="1.5"><line x1="15.5" y1="1" x2="1.5" y2="15"/><line x1="15.5" y1="5.500" x2="6" y2="15"/><line x1="15.500" y1="10" x2="10.500" y2="15"/></g><g stroke="#fff" stroke-width="1.2"><line x1="15.5" y1="2.600" x2="3.100" y2="15"/><line x1="15.5" y1="7.100" x2="7.600" y2="15"/><line x1="15.500" y1="11.600" x2="12.100" y2="15"/></g></svg>
<div id="taskbar"></div>
<svg id="tbi" style="position:absolute;left:0;top:728px" width="1349" height="16" viewBox="0 728 1349 16">
<defs>
<radialGradient id="tBall" cx=".4" cy=".3" r=".8"><stop offset="0" stop-color="#e85a40"/><stop offset=".5" stop-color="#b02010"/><stop offset="1" stop-color="#701008"/></radialGradient>
<radialGradient id="tOr" cx=".5" cy=".2" r=".9"><stop offset="0" stop-color="#ffc060"/><stop offset="1" stop-color="#f08018"/></radialGradient>
<radialGradient id="tY" cx=".5" cy=".3" r=".8"><stop offset="0" stop-color="#ffffff"/><stop offset="1" stop-color="#dcdcdc"/></radialGradient>
</defs>
<polygon points="0,737.600 6,736.700 6,744 0,744" fill="#fff"/><polygon points="7.200,736.500 21,734.600 21,744 7.200,744" fill="#fff"/>
<rect x="49" y="733" width="29.500" height="11" fill="#008a00"/><path d="M60 744 q0 -6.500 4.500 -6.500 q4.500 0 4.500 6.500" fill="none" stroke="#fff" stroke-width="1.600"/><polygon points="55,742.500 73,741 73,744 55,744" fill="#fff"/>
<polygon points="111,735.300 128,733 128,744 111,744" fill="#2b579a"/><rect x="128" y="736" width="12.500" height="8" fill="#fff"/><rect x="130" y="738.500" width="8" height="1.500" fill="#2b579a"/><rect x="130" y="741.500" width="8" height="1.500" fill="#2b579a"/><path d="M114 741 l1.500 3 M117.200 741 l1 3 M119.500 741 l-1 3 M122.500 741 l-1.200 3" stroke="#fff" stroke-width="1.300" fill="none"/>
<rect x="159.5" y="729.5" width="57" height="16" fill="#fff" fill-opacity="0.16" stroke="#fff" stroke-opacity="0.38" stroke-width="1"/>
<circle cx="188" cy="747.500" r="13.500" fill="#db4437"/><path d="M188 747.500 L199.700 740.800 A13.500 13.500 0 0 1 201.500 747.500z" fill="#ffcd40"/><path d="M188 747.500 L176.300 740.800 A13.500 13.500 0 0 0 174.500 747.500z" fill="#0f9d58"/><circle cx="188" cy="747.500" r="6.200" fill="#f1f1f1"/><circle cx="188" cy="747.500" r="5" fill="#4285f4"/>
<polygon points="234,732.300 256,732.300 262.500,740 262.500,744 234,744" fill="#7ab4ee"/><polygon points="234.800,733 255.500,733 261.500,740.300 261.500,744 234.800,744" fill="#9cc8f4"/><circle cx="248.500" cy="744.500" r="7" fill="#f4f8ff"/><path d="M248.500 737.500 A7 7 0 0 1 255.300 744 L248.500 744z" fill="#5a9ade"/>
<polygon points="296,732.500 319,732.500 325.500,740 325.500,744 296,744" fill="#f8f8f8"/><polygon points="319,732.500 325.500,740 319,740" fill="#d8d8d8"/><text x="303.500" y="751.200" font-family="Liberation Sans,sans-serif" font-weight="bold" font-size="17" fill="#e8281c">Я</text>
<circle cx="374" cy="746" r="14" fill="url(#tY)"/><path d="M364 736.500 L374 747 L374 752 M374 747 L384.500 736.800" stroke="#ee1c1c" stroke-width="4" fill="none"/>
<rect x="407.5" y="729.5" width="57" height="16" fill="#fff" fill-opacity="0.16" stroke="#fff" stroke-opacity="0.38" stroke-width="1"/>
<circle cx="432" cy="744" r="10" fill="#00aff0"/><circle cx="440.500" cy="747" r="9.500" fill="#00aff0"/><path d="M431.500 744 q1 -3 5 -3 q4 0 5 3" fill="none" stroke="#fff" stroke-width="2.200"/>
<rect x="469.5" y="729.5" width="57" height="16" fill="#fff" fill-opacity="0.16" stroke="#fff" stroke-opacity="0.38" stroke-width="1"/>
<rect x="484.500" y="733.500" width="17" height="11" fill="#eaf2ff" stroke="#3a7ad8" stroke-width="1"/><rect x="484" y="733" width="18" height="2.500" fill="#3a7ad8"/><rect x="491.500" y="736.500" width="17" height="8" fill="#eaf2ff" stroke="#3a7ad8" stroke-width="1"/><rect x="491" y="736" width="18" height="2.500" fill="#3a7ad8"/><circle cx="491" cy="744.500" r="3" fill="#e09030"/><text x="494" y="744.500" font-family="Liberation Sans,sans-serif" font-size="6" fill="#3a7ad8">10</text>
<rect x="531.5" y="729.5" width="57" height="16" fill="#fff" fill-opacity="0.28" stroke="#fff" stroke-opacity="0.75" stroke-width="1"/>
<ellipse cx="560.500" cy="748" rx="14.500" ry="12" fill="url(#tBall)"/><path d="M566 739 q5 1.500 7 5" stroke="#f0b0a0" stroke-width="1.200" fill="none" opacity=".8"/><rect x="548" y="742" width="1.500" height="2" fill="#fff"/>
<rect x="593.5" y="729.5" width="57" height="16" fill="#fff" fill-opacity="0.16" stroke="#fff" stroke-opacity="0.38" stroke-width="1"/>
<ellipse cx="622" cy="745" rx="14" ry="13" fill="url(#tOr)"/><path d="M612.500 744 q0 -6 9.500 -6 q9.500 0 9.500 6z" fill="#fff4e0"/><path d="M613 742.500 l1 1.500 l1 -1.500 l1 1.500 l1 -1.500 l1 1.500 l1 -1.500 l1 1.500 l1 -1.500 l1 1.500 l1 -1.500 l1 1.500 l1 -1.500 l1 1.500 l1 -1.500 l1 1.500 l1 -1.500 l1 1.500 l1 -1.500" stroke="#f09030" stroke-width=".8" fill="none"/>
<polygon points="1144.600,741.300 1147.400,744 1141.800,744" fill="#fff"/>
<rect x="1158.500" y="741.800" width="15" height="3" fill="#c8c8c8" stroke="#fff" stroke-width="1.100"/>
<rect x="1183" y="741.300" width="1.700" height="3" fill="#fff"/><rect x="1185.700" y="741.300" width="1.700" height="3" fill="#fff"/><path d="M1188.500 744 q0 -2.500 3 -2.500 q1 -1 2.500 0 q3.500 0 3.500 2.500z" fill="#fff"/>
<rect x="1218.600" y="742.900" width="3.300" height="1.200" fill="#403030"/>
<text x="1292.800" y="744.800" font-family="Liberation Sans,sans-serif" font-size="12.300" fill="#fff" textLength="21" lengthAdjust="spacingAndGlyphs">9:14</text>
</svg>
</div>
</body></html>
